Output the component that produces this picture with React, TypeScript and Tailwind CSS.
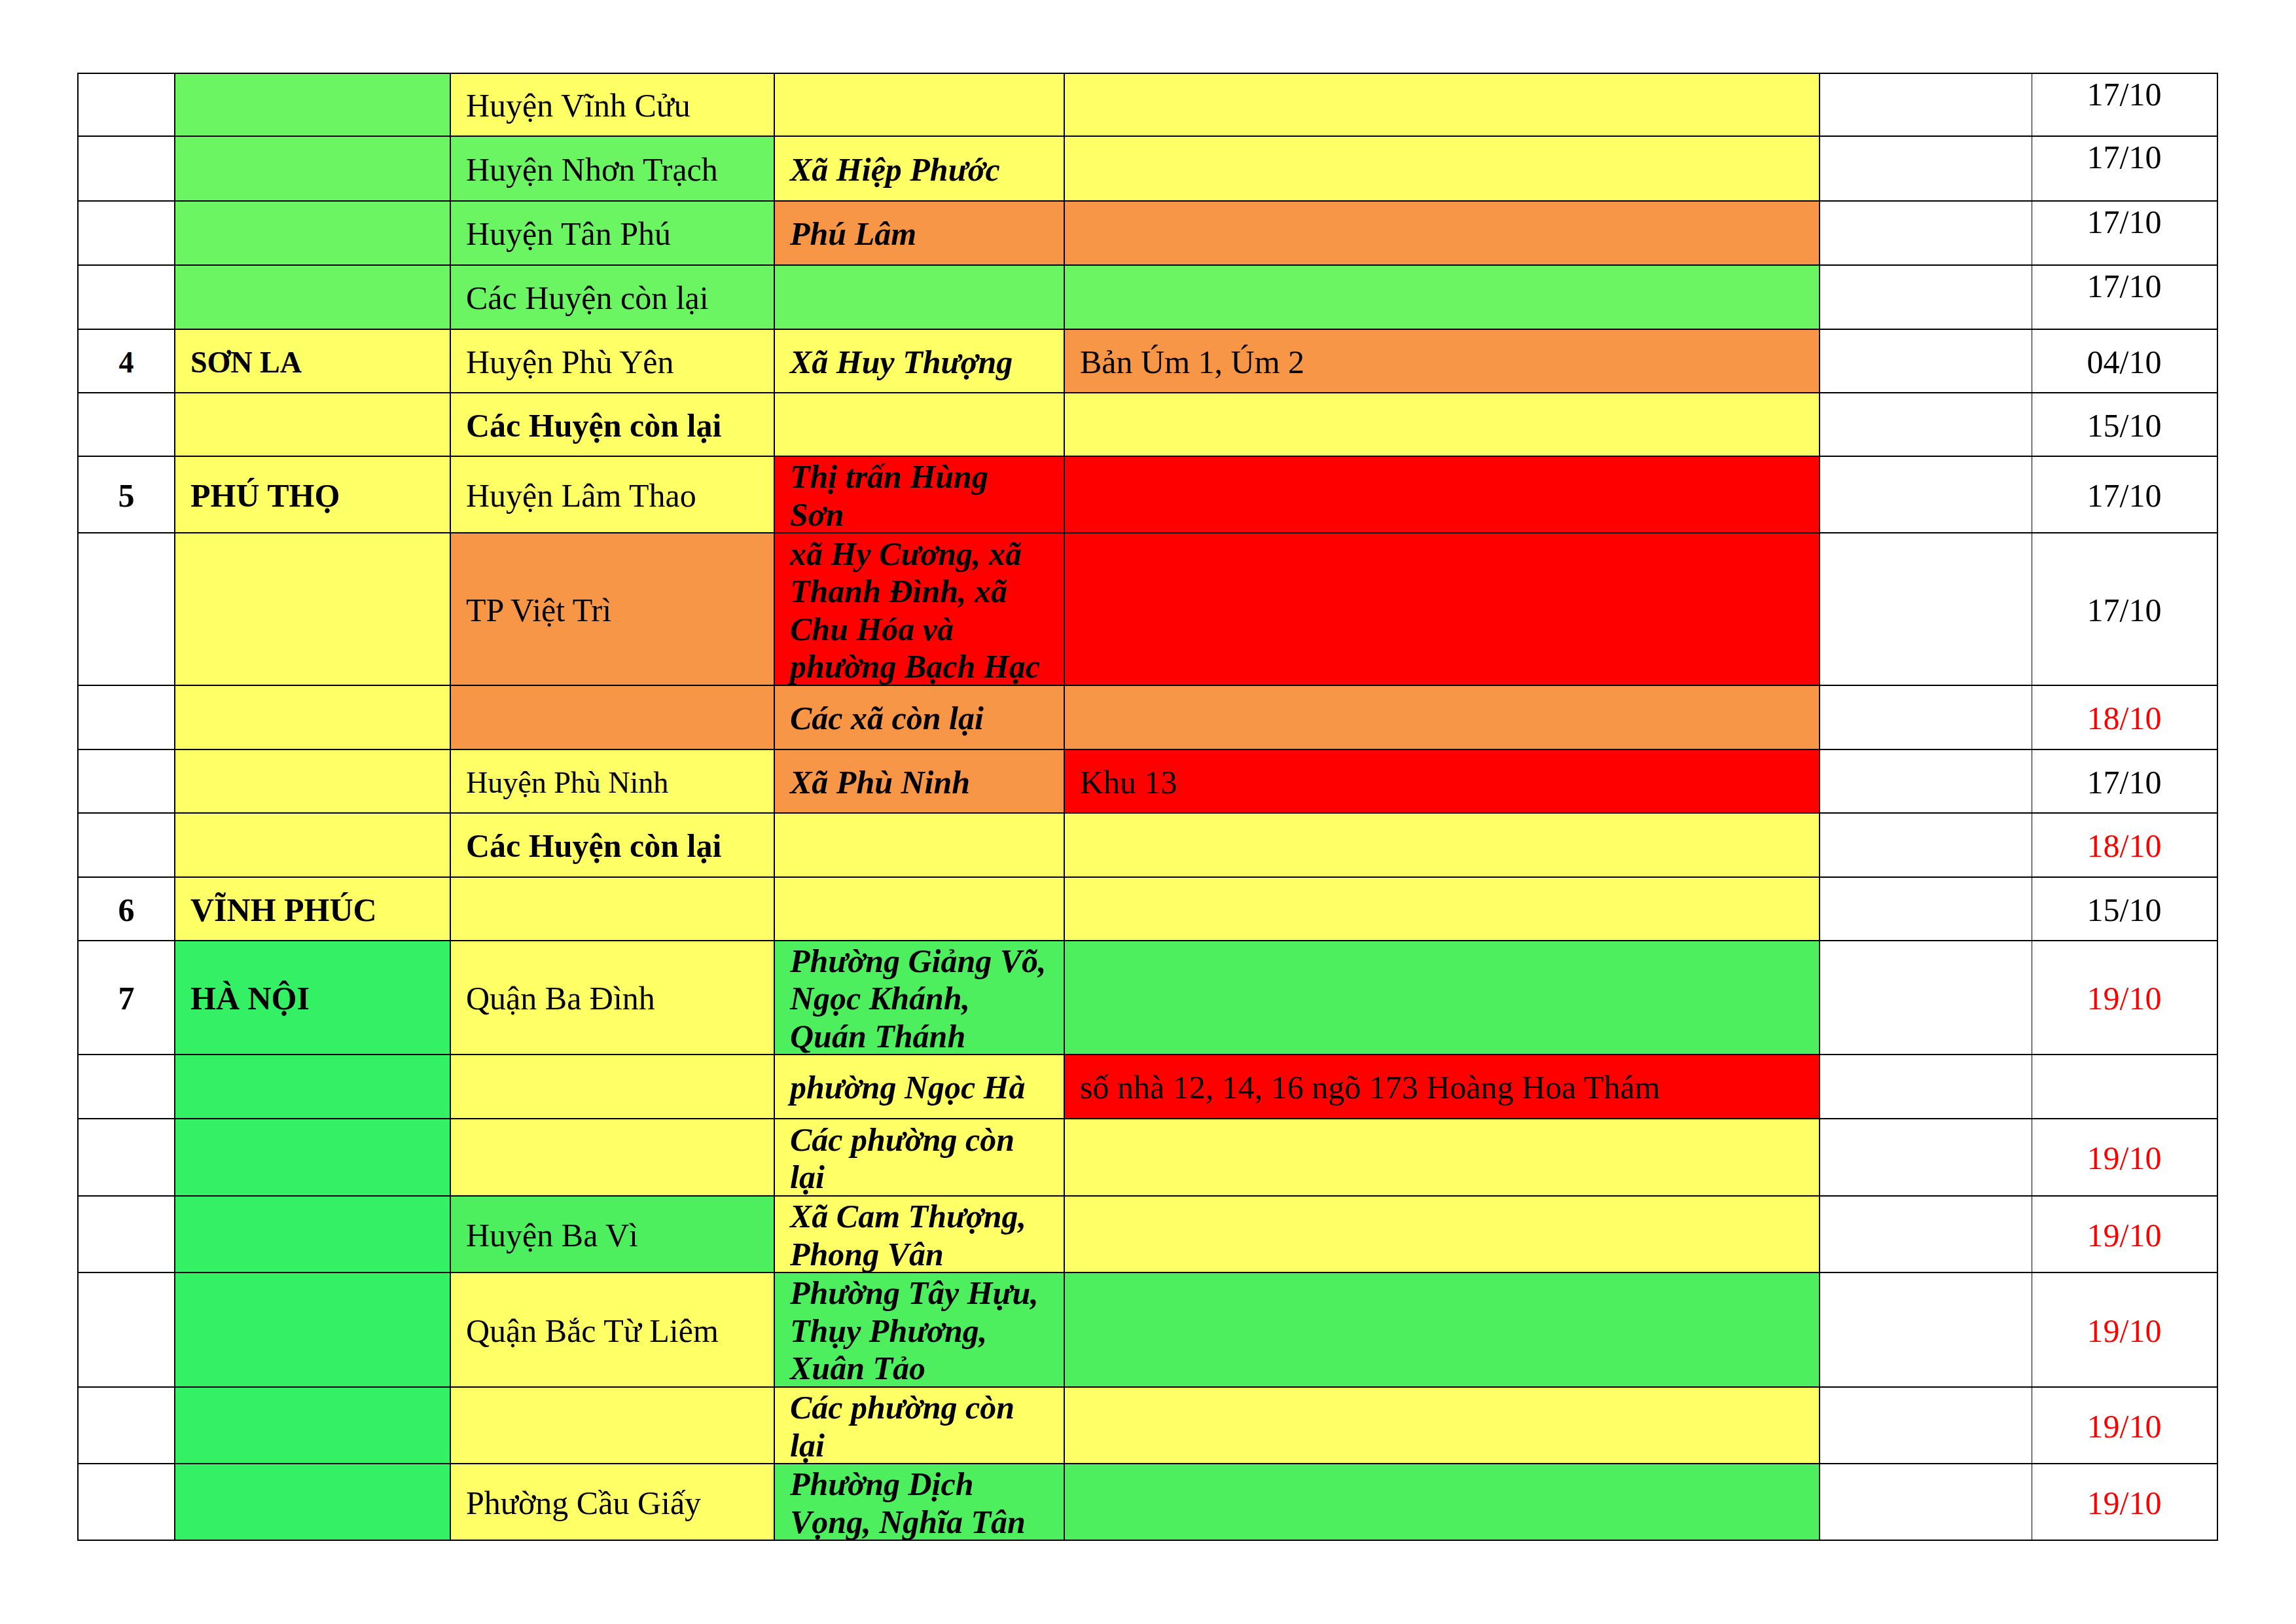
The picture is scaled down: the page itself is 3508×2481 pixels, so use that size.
import React from 'react';

type Cell = { text?: React.ReactNode; bg?: string; kind?: 'r' | 'b' | 'bi'; small?: boolean };
type Row = { h: string; no?: string; noSmall?: boolean; cells: Cell[]; date?: string; red?: boolean; top?: boolean };

const LG = 'bg-[#6CF563]';
const Y = 'bg-[#FFFF66]';
const O = 'bg-[#F79646]';
const R = 'bg-[#FF0000]';
const G2 = 'bg-[#33F065]';
const G3 = 'bg-[#4EEF5F]';

const ROWS: Row[] = [
  { h: 'h-[96px]', top: true, date: '17/10', cells: [{ bg: LG }, { bg: Y, text: 'Huyện Vĩnh Cửu' }, { bg: Y }, { bg: Y }] },
  { h: 'h-[99px]', top: true, date: '17/10', cells: [{ bg: LG }, { bg: LG, text: 'Huyện Nhơn Trạch' }, { bg: Y, text: 'Xã Hiệp Phước', kind: 'bi' }, { bg: Y }] },
  { h: 'h-[98px]', top: true, date: '17/10', cells: [{ bg: LG }, { bg: LG, text: 'Huyện Tân Phú' }, { bg: O, text: 'Phú Lâm', kind: 'bi' }, { bg: O }] },
  { h: 'h-[98px]', top: true, date: '17/10', cells: [{ bg: LG }, { bg: LG, text: 'Các Huyện còn lại' }, { bg: LG }, { bg: LG }] },
  { h: 'h-[97px]', no: '4', noSmall: true, date: '04/10', cells: [{ bg: Y, text: 'SƠN LA', kind: 'b', small: true }, { bg: Y, text: 'Huyện Phù Yên' }, { bg: Y, text: 'Xã Huy Thượng', kind: 'bi' }, { bg: O, text: 'Bản Úm 1, Úm 2' }] },
  { h: 'h-[97px]', date: '15/10', cells: [{ bg: Y }, { bg: Y, text: 'Các Huyện còn lại', kind: 'b' }, { bg: Y }, { bg: Y }] },
  { h: 'h-[117px]', no: '5', date: '17/10', cells: [{ bg: Y, text: 'PHÚ THỌ', kind: 'b' }, { bg: Y, text: 'Huyện Lâm Thao' }, { bg: R, text: <>Thị trấn Hùng<br />Sơn</>, kind: 'bi' }, { bg: R }] },
  { h: 'h-[233px]', date: '17/10', cells: [{ bg: Y }, { bg: O, text: 'TP Việt Trì' }, { bg: R, text: <>xã Hy Cương, xã<br />Thanh Đình, xã<br />Chu Hóa và<br />phường Bạch Hạc</>, kind: 'bi' }, { bg: R }] },
  { h: 'h-[98px]', date: '18/10', red: true, cells: [{ bg: Y }, { bg: O }, { bg: O, text: 'Các xã còn lại', kind: 'bi' }, { bg: O }] },
  { h: 'h-[97px]', date: '17/10', cells: [{ bg: Y }, { bg: Y, text: 'Huyện Phù Ninh', small: true }, { bg: O, text: 'Xã Phù Ninh', kind: 'bi' }, { bg: R, text: 'Khu 13' }] },
  { h: 'h-[98px]', date: '18/10', red: true, cells: [{ bg: Y }, { bg: Y, text: 'Các Huyện còn lại', kind: 'b' }, { bg: Y }, { bg: Y }] },
  { h: 'h-[97px]', no: '6', date: '15/10', cells: [{ bg: Y, text: 'VĨNH PHÚC', kind: 'b' }, { bg: Y }, { bg: Y }, { bg: Y }] },
  { h: 'h-[174px]', no: '7', date: '19/10', red: true, cells: [{ bg: G2, text: 'HÀ NỘI', kind: 'b' }, { bg: Y, text: 'Quận Ba Đình' }, { bg: G3, text: <>Phường Giảng Võ,<br />Ngọc Khánh,<br />Quán Thánh</>, kind: 'bi' }, { bg: G3 }] },
  { h: 'h-[98px]', cells: [{ bg: G2 }, { bg: Y }, { bg: Y, text: 'phường Ngọc Hà', kind: 'bi' }, { bg: R, text: 'số nhà 12, 14, 16 ngõ 173 Hoàng Hoa Thám' }] },
  { h: 'h-[118px]', date: '19/10', red: true, cells: [{ bg: G2 }, { bg: Y }, { bg: Y, text: <>Các phường còn<br />lại</>, kind: 'bi' }, { bg: Y }] },
  { h: 'h-[117px]', date: '19/10', red: true, cells: [{ bg: G2 }, { bg: G3, text: 'Huyện Ba Vì' }, { bg: Y, text: <>Xã Cam Thượng,<br />Phong Vân</>, kind: 'bi' }, { bg: Y }] },
  { h: 'h-[175px]', date: '19/10', red: true, cells: [{ bg: G2 }, { bg: Y, text: 'Quận Bắc Từ Liêm' }, { bg: G3, text: <>Phường Tây Hựu,<br />Thụy Phương,<br />Xuân Tảo</>, kind: 'bi' }, { bg: G3 }] },
  { h: 'h-[117px]', date: '19/10', red: true, cells: [{ bg: G2 }, { bg: Y }, { bg: Y, text: <>Các phường còn<br />lại</>, kind: 'bi' }, { bg: Y }] },
  { h: 'h-[117px]', date: '19/10', red: true, cells: [{ bg: G2 }, { bg: Y, text: 'Phường Cầu Giấy' }, { bg: G3, text: <>Phường Dịch<br />Vọng, Nghĩa Tân</>, kind: 'bi' }, { bg: G3 }] },
];

const TextCell: React.FC<{ cell: Cell }> = ({ cell }) => {
  const weight = cell.kind === 'b' ? 'font-bold' : cell.kind === 'bi' ? 'font-bold italic' : 'font-normal';
  const size = cell.small ? 'text-[46px]' : 'text-[50px]';
  return (
    <div className={`flex min-h-0 items-center border-r-2 border-black pl-[23px] pr-[10px] pt-[4px] ${cell.bg ?? ''}`}>
      {cell.text && <span className={`${size} ${weight} leading-[57.5px] whitespace-nowrap`}>{cell.text}</span>}
    </div>
  );
};

export default function App() {
  return (
    <div className="w-[3508px] h-[2481px] bg-white font-['Liberation_Serif','Times_New_Roman',serif] text-black">
      <div className="ml-[118px] pt-[111px]">
        <div className="w-[3271px] border-t-2 border-l-2 border-r-2 border-black">
          {ROWS.map((row, i) => (
            <div key={i} className={`grid grid-cols-[148px_421px_495px_443px_1154px_324px_281px] grid-rows-[minmax(0,1fr)] border-b-2 border-black ${row.h}`}>
              <div className="flex min-h-0 items-center justify-center border-r-2 border-black pt-[4px]">
                {row.no && <span className={`${row.noSmall ? 'text-[46px]' : 'text-[50px]'} font-bold leading-[57.5px]`}>{row.no}</span>}
              </div>
              {row.cells.map((c, j) => <TextCell key={j} cell={c} />)}
              <div className="border-r border-black" />
              <div className={`flex min-h-0 justify-center ${row.top ? 'items-start pt-[3px]' : 'items-center pt-[4px]'}`}>
                {row.date && <span className={`text-[50px] leading-[57.5px] ${row.red ? 'text-[#FF0000]' : 'text-black'}`}>{row.date}</span>}
              </div>
            </div>
          ))}
        </div>
      </div>
    </div>
  );
}
